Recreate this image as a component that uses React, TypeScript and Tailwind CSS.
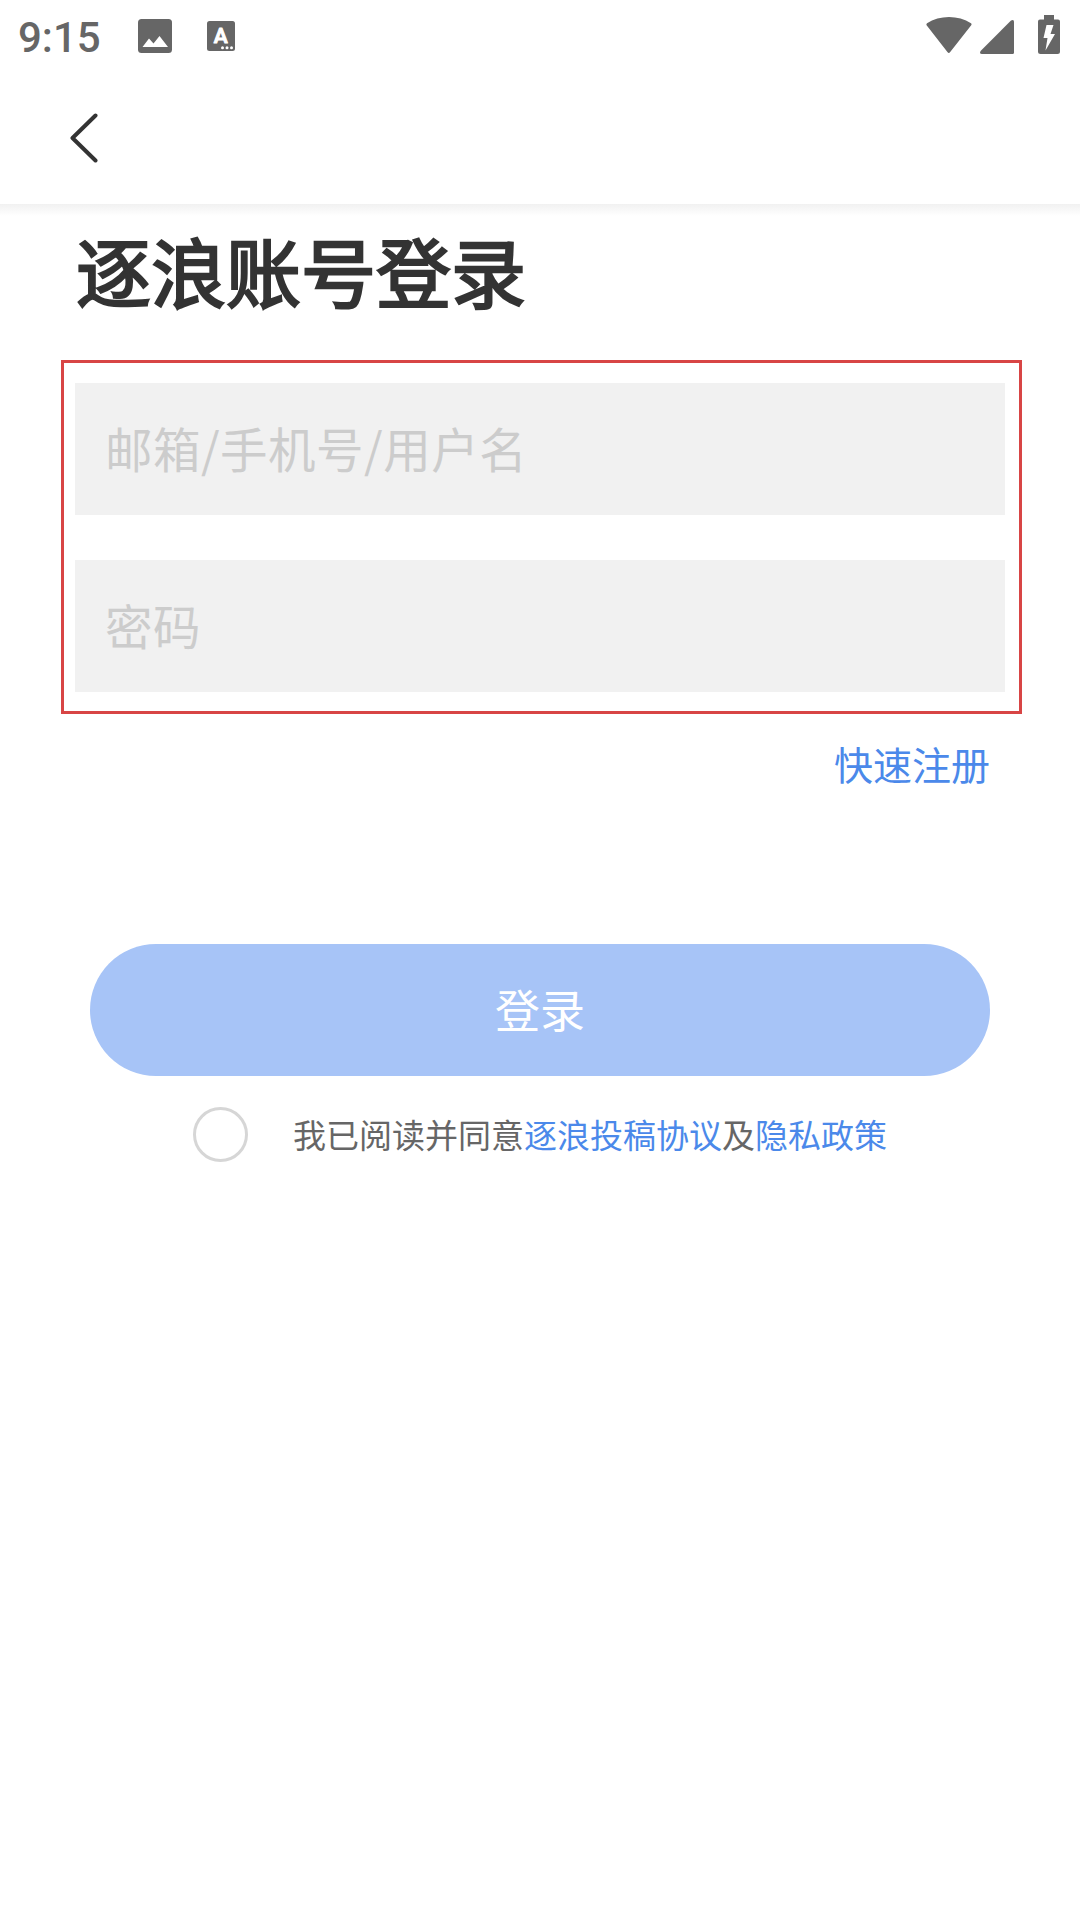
import { useState } from "react"

const fields = [
    {
        name: "account",
        type: "text",
        placeholder: "邮箱/手机号/用户名"
    },
    {
        name: "password",
        type: "password",
        placeholder: "密码"
    },
]

const StatusBar = () => {
    return (
        <div className="flex h-18 items-start justify-between pl-[18px] pr-5 text-[#666666]">
            <div className="flex items-start">
                <span className="w-[120px] pt-[13px] font-['Roboto'] text-[42px] font-medium leading-[49px]">9:15</span>
                <svg className="mt-[19px] h-[34px] w-[34px]" viewBox="0 0 34 34">
                    <rect width="34" height="34" rx="3.5" fill="currentColor" />
                    <path d="M4.5 28 L11 19.5 L15.5 24.5 L21.5 17 L30 28 Z" fill="#fff" />
                </svg>
                <svg className="ml-[35px] mt-[21px] h-[30px] w-[28px]" viewBox="0 0 28 30">
                    <rect width="28" height="30" rx="2.5" fill="currentColor" />
                    <text x="13.7" y="22" textAnchor="middle" fill="#fff" stroke="#fff" strokeWidth="1" strokeLinejoin="round" className="font-['Roboto'] text-[21px] font-medium">A</text>
                    <circle cx="15.5" cy="26.7" r="1.5" fill="#fff" />
                    <circle cx="20" cy="26.7" r="1.5" fill="#fff" />
                    <circle cx="24.5" cy="26.7" r="1.5" fill="#fff" />
                </svg>
            </div>
            <div className="flex items-start">
                <svg className="mt-[17px] h-[36px] w-[46px]" viewBox="0 0 46 36" fill="currentColor">
                    <path d="M1 6.2 C13.5 -2 32.5 -2 45 6.2 Q46 7.2 45.2 8.3 L24.2 35 Q22.8 36.8 21.4 35 L0.6 8.3 Q0 7.2 1 6.2 Z" />
                </svg>
                <svg className="ml-[8px] mt-[20px] h-[34px] w-[34px]" viewBox="0 0 34 34" fill="currentColor">
                    <path d="M31 0.6 Q34 -1 34 2 V32.5 Q34 34 32.5 34 H2 Q-1 34 0.6 31 Z" />
                </svg>
                <svg className="ml-[24px] mt-[15px] h-[39px] w-[22px]" viewBox="0 0 22 39">
                    <path d="M6 0 H16 V4.5 H20 Q22 4.5 22 6.5 V36.5 Q22 39 19.5 39 H2.5 Q0 39 0 36.5 V6.5 Q0 4.5 2 4.5 H6 Z" fill="currentColor" />
                    <path d="M8.5 10 H15.5 L12.5 19 H17 L7.5 35.5 L9.5 23 H5.5 Z" fill="#fff" />
                </svg>
            </div>
        </div>
    )
}

export default function App() {
    const [agreed, setAgreed] = useState(false)

    return (
        <div className="h-[1920px] w-[1080px] overflow-hidden bg-white font-['Noto_Sans_CJK_SC',sans-serif]">
            <StatusBar />
            <header className="h-[132px] pl-[69px] pt-[41px]">
                <button aria-label="返回" className="block">
                    <svg className="h-[50px] w-[30px]" viewBox="0 0 30 50" fill="none">
                        <path d="M26.5 2.5 L3.5 25 L26.5 47.5" stroke="#333" strokeWidth="4" strokeLinecap="round" strokeLinejoin="round" />
                    </svg>
                </button>
            </header>
            <div className="h-3 bg-linear-to-b from-[#f1f1f1] to-white" />

            <main>
                <h1 className="ml-[76px] h-[108px] text-[75px] font-normal leading-[108px] text-[#333333] [-webkit-text-stroke:2.4px_#333333]">逐浪账号登录</h1>

                <div className="ml-[61px] mt-9 flex w-[961px] flex-col gap-[45px] border-[3px] border-[#d84545] pb-[19px] pl-[11px] pr-[14px] pt-[20px]">
                    {fields.map((item) => (
                        <input
                            key={item.name}
                            name={item.name}
                            type={item.type}
                            placeholder={item.placeholder}
                            className="h-[132px] w-full bg-[#f1f1f1] px-[30px] pb-[3px] text-[47.5px] tracking-[0.5px] text-[#333333] placeholder:text-[#cccccc]"
                        />
                    ))}
                </div>

                <div className="mt-[21px] flex justify-end pr-[90px]">
                    <a className="text-[39px] leading-[56px] text-[#4b89ea]">快速注册</a>
                </div>

                <button className="mx-auto mt-[153px] flex h-[132px] w-[900px] items-center justify-center rounded-full bg-[#a7c4f7] pb-[3px] text-[45px] text-white">登录</button>

                <div className="mt-[31px] flex items-center pl-[193px]">
                    <button
                        aria-label="同意"
                        onClick={() => setAgreed(!agreed)}
                        className={agreed ? "h-[55px] w-[55px] rounded-full bg-[#4b89ea]" : "h-[55px] w-[55px] rounded-full border-[3px] border-[#d6d6d6]"}
                    />
                    <p className="ml-[45px] pb-[2px] text-[33px] leading-[48px] text-[#666666]">
                        我已阅读并同意
                        <a className="text-[#4b89ea]">逐浪投稿协议</a>
                        及
                        <a className="text-[#4b89ea]">隐私政策</a>
                    </p>
                </div>
            </main>
        </div>
    )
}
